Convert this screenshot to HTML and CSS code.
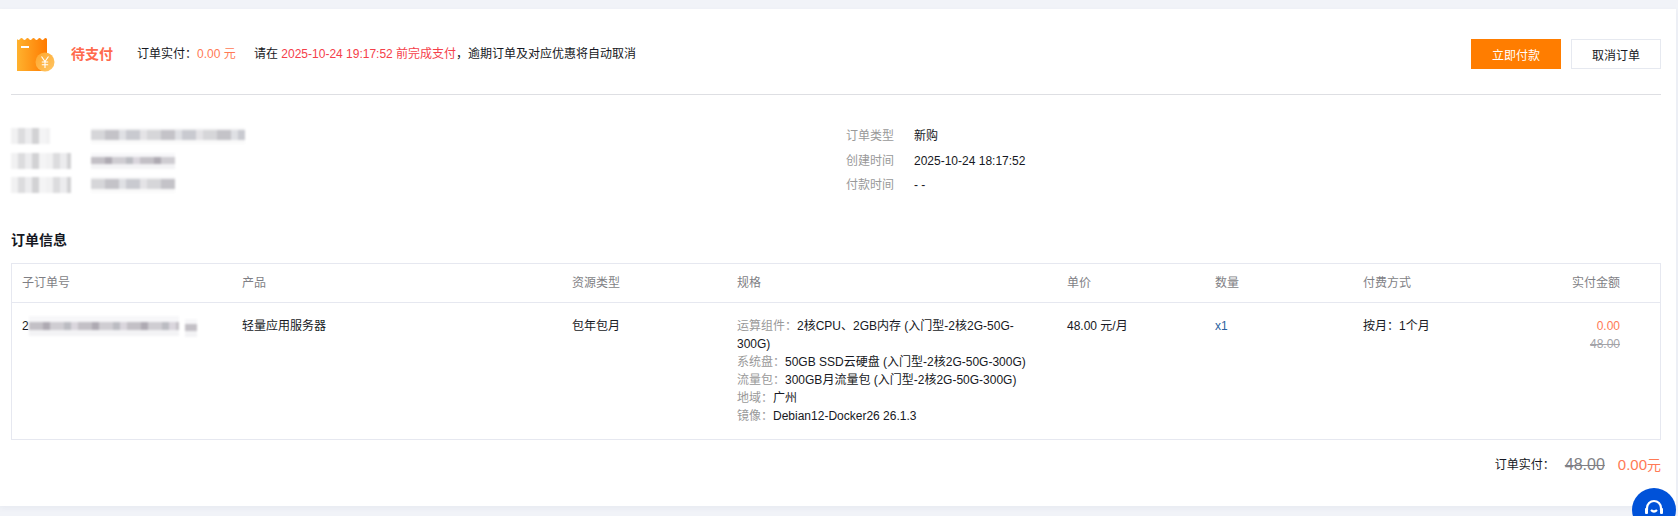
FILE: index.html
```html
<!DOCTYPE html>
<html lang="zh-CN">
<head>
    <meta charset="UTF-8">
    <meta name="viewport" content="width=device-width, initial-scale=1.0">
    <title>订单详情</title>
    <link rel="stylesheet" href="styles.css">
</head>
<body>
    <div class="card">
        <div class="status-bar">
            <svg class="status-icon" width="38" height="34" viewBox="0 0 38 34">
                <defs>
                    <linearGradient id="billFill" x1="0" y1="0" x2="1" y2="0">
                        <stop offset="0" stop-color="#ffb22e"/>
                        <stop offset="1" stop-color="#ff7a00"/>
                    </linearGradient>
                    <linearGradient id="coinFill" x1="0" y1="0" x2="1" y2="1">
                        <stop offset="0" stop-color="#ffa62b"/>
                        <stop offset="1" stop-color="#ffc766"/>
                    </linearGradient>
                </defs>
                <path d="M0 1 Q1.5 3 3 1 T6 1 T9 1 T12 1 T15 1 T18 1 T21 1 T24 1 T27 1 T30 1 V33 H0 Z" fill="url(#billFill)"/>
                <rect x="4" y="8" width="8" height="2" fill="#fff"/>
                <circle cx="28" cy="24" r="9.5" fill="url(#coinFill)"/>
                <path d="M24.5 18.5 L28 23.5 L31.5 18.5 M28 23.5 V30 M24.8 24 H31.2 M24.8 26.8 H31.2" fill="none" stroke="#fff" stroke-width="1.1"/>
            </svg>
            <span class="status-name">待支付</span>
            <span class="status-amount">订单实付：<em class="orange">0.00 元</em></span>
            <span class="status-tip">请在 <em class="red">2025-10-24 19:17:52 前完成支付</em>，逾期订单及对应优惠将自动取消</span>
            <div class="actions">
                <button class="btn btn-primary" type="button">立即付款</button>
                <button class="btn" type="button">取消订单</button>
            </div>
        </div>

        <div class="info">
            <div class="info-col">
                <div class="info-row"><span class="mask mask-a mask-label-s"></span><span class="mask mask-b mask-value-l"></span></div>
                <div class="info-row"><span class="mask mask-a mask-label"></span><span class="mask mask-c mask-value"></span></div>
                <div class="info-row"><span class="mask mask-a mask-label"></span><span class="mask mask-b mask-value"></span></div>
            </div>
            <div class="info-right">
                <div class="info-row"><span class="info-label">订单类型</span><span>新购</span></div>
                <div class="info-row"><span class="info-label">创建时间</span><span>2025-10-24 18:17:52</span></div>
                <div class="info-row"><span class="info-label">付款时间</span><span>- -</span></div>
            </div>
        </div>

        <h3 class="section-title">订单信息</h3>

        <div class="order-table">
            <div class="table-row table-head">
                <div>子订单号</div>
                <div>产品</div>
                <div>资源类型</div>
                <div>规格</div>
                <div>单价</div>
                <div>数量</div>
                <div>付费方式</div>
                <div class="col-price">实付金额</div>
            </div>
            <div class="table-row table-body">
                <div class="order-no">2<span class="mask mask-c mask-order"></span><span class="mask mask-c mask-order-end"></span></div>
                <div>轻量应用服务器</div>
                <div>包年包月</div>
                <div class="spec">
                    <div><span class="spec-key">运算组件：</span>2核CPU、2GB内存 (入门型-2核2G-50G-300G)</div>
                    <div><span class="spec-key">系统盘：</span>50GB SSD云硬盘 (入门型-2核2G-50G-300G)</div>
                    <div><span class="spec-key">流量包：</span>300GB月流量包 (入门型-2核2G-50G-300G)</div>
                    <div><span class="spec-key">地域：</span>广州</div>
                    <div><span class="spec-key">镜像：</span>Debian12-Docker26 26.1.3</div>
                </div>
                <div>48.00 元/月</div>
                <div class="qty">x1</div>
                <div>按月：1个月</div>
                <div class="col-price">
                    <div class="orange">0.00</div>
                    <div class="old-price">48.00</div>
                </div>
            </div>
        </div>

        <div class="total">
            <span class="total-label">订单实付：</span>
            <span class="total-old">48.00</span>
            <span class="total-now">0.00<small>元</small></span>
        </div>
    </div>

    <div class="help-btn">
        <svg width="24" height="24" viewBox="0 0 24 24" fill="none" stroke="#fff" stroke-width="2.2">
            <path d="M5 12 V10 a7 7 0 0 1 14 0 V12"/>
            <rect x="3" y="10" width="3" height="6" rx="1" fill="#fff" stroke="none"/>
            <rect x="18" y="10" width="3" height="6" rx="1" fill="#fff" stroke="none"/>
            <path d="M9 12 Q12 15 15 12"/>
        </svg>
    </div>
</body>
</html>
```

FILE: styles.css
```css
* {
    box-sizing: border-box;
    margin: 0;
    padding: 0;
}

html, body {
    height: 516px;
    overflow: hidden;
}

body {
    font-family: 'Liberation Sans', 'Noto Sans CJK SC', Arial, sans-serif;
    font-size: 12px;
    line-height: 18px;
    color: #161823;
    background: #f1f3f8;
    padding: 9px 2px 0 0;
}

em {
    font-style: normal;
}

.orange {
    color: #ff7a55;
}

.red {
    color: #f5404a;
}

.card {
    background: #fff;
    height: 497px;
    padding: 30px 15px 0 11px;
    box-shadow: 0 2px 6px rgba(40, 50, 90, 0.05);
}

.status-bar {
    display: flex;
    align-items: center;
    height: 56px;
    padding-bottom: 25px;
    border-bottom: 1px solid #dedfe3;
}

.status-icon {
    margin-left: 6px;
    margin-top: 1px;
    flex-shrink: 0;
}

.status-name {
    margin-left: 16px;
    font-size: 14px;
    font-weight: 700;
    color: #ff6a4d;
    width: 66px;
}

.status-amount {
    width: 117px;
}

.actions {
    margin-left: auto;
    display: flex;
    gap: 10px;
}

.btn {
    width: 90px;
    height: 30px;
    font-family: inherit;
    font-size: 12px;
    color: #161823;
    background: #fff;
    border: 1px solid #e6e9f0;
}

.btn-primary {
    color: #fff;
    background: #ff7d00;
    border-color: #ff7d00;
}

.info {
    display: flex;
    margin-top: 29px;
}

.info-col {
    width: 835px;
}

.info-right {
    flex: 1;
}

.info-row {
    display: flex;
    align-items: center;
    height: 24.5px;
}

.info-label {
    width: 68px;
    color: #999;
}

.mask {
    display: block;
    height: 16px;
    filter: blur(1px);
}

/* pixelated privacy masks */
.mask-a {
    background: repeating-linear-gradient(90deg, #f1f1f2 0 7px, #dcdcde 7px 14px, #ececee 14px 21px, #d2d2d4 21px 28px, #f4f4f5 28px 35px);
}

.mask-b {
    background:
        linear-gradient(#f6f6f7 0 15%, transparent 15% 75%, #fafafa 75%),
        repeating-linear-gradient(90deg, #d6d6d9 0 14px, #c4c3c8 14px 28px, #dfe0e4 28px 35px, #c9cad0 35px 49px, #e4e3e6 49px 56px);
}

.mask-c {
    background:
        linear-gradient(#f7f7f9 0 28%, transparent 28% 68%, #f3f3f5 68%),
        repeating-linear-gradient(90deg, #c3c0c6 0 14px, #aeaab2 14px 21px, #cfcdd2 21px 35px, #bbbcc2 35px 42px, #dad6dd 42px 49px);
}

.mask-label-s {
    width: 39px;
    margin-right: 41px;
}

.mask-label {
    width: 60px;
    margin-right: 20px;
}

.mask-value-l {
    width: 154px;
}

.mask-value {
    width: 84px;
}

.section-title {
    margin-top: 32px;
    font-size: 14px;
    line-height: 20px;
    font-weight: 700;
    color: #161823;
}

.order-table {
    margin-top: 13px;
    border: 1px solid #e6e8f0;
}

.table-row {
    display: grid;
    grid-template-columns: 220px 330px 165px 330px 148px 148px 148px 1fr;
    padding-left: 10px;
}

.table-head {
    height: 39px;
    align-items: center;
    color: #7f7f85;
    border-bottom: 1px solid #e6e8f0;
}

.table-body {
    height: 136px;
    padding-top: 14px;
}

.col-price {
    text-align: right;
    padding-right: 40px;
}

.order-no {
    display: flex;
    height: 18px;
}

.mask-order {
    width: 150px;
    height: 20px;
    margin-top: -1px;
}

.mask-order-end {
    width: 12px;
    height: 18px;
    margin: 2px 0 0 6px;
}

.spec {
    padding-right: 40px;
}

.spec-key {
    color: #999;
}

.qty {
    color: #2b5f9e;
}

.old-price {
    color: #a3a3a8;
    text-decoration: line-through;
}

.total {
    display: flex;
    justify-content: flex-end;
    align-items: center;
    margin-top: 13px;
    height: 24px;
}

.total-old {
    margin-left: 10px;
    font-size: 16px;
    color: #7f7f85;
    text-decoration: line-through;
}

.total-now {
    margin-left: 13px;
    font-size: 15px;
    color: #ff7a55;
}

.total-now small {
    font-size: 14px;
}

.help-btn {
    position: fixed;
    left: 1632px;
    top: 488px;
    width: 44px;
    height: 44px;
    padding-top: 10px;
    border-radius: 50%;
    background: #0052d9;
    display: flex;
    justify-content: center;
    align-items: flex-start;
}
```
